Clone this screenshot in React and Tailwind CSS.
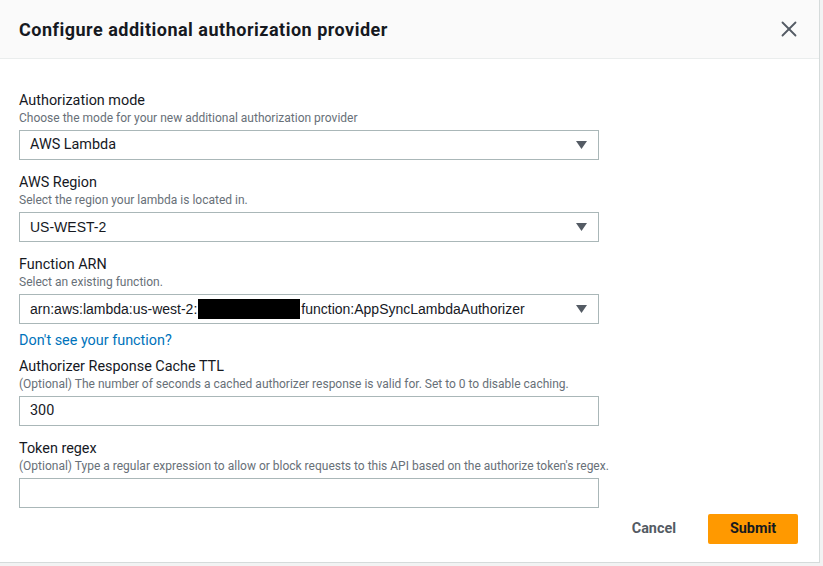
import { X } from "lucide-react";

const Caret = () => (
	<svg width="11" height="8" viewBox="0 0 11 8" className="shrink-0">
		<path d="M0 0h11L5.5 8z" fill="#545b64" />
	</svg>
);

const Field = ({ label, hint, children }) => (
	<div className="mb-3">
		<div className="pt-[1px] text-[14.4px] leading-[19px] text-[#16191f]">{label}</div>
		<div className="text-[12px] leading-[16px] text-[#687078]">{hint}</div>
		<div className="mt-1">{children}</div>
	</div>
);

const SelectBox = ({ children, mono }) => (
	<div className="flex h-[30px] w-[580px] items-center justify-between border border-[#aab7b8] bg-white pl-[10px] pr-[11px]">
		<div
			className={
				mono
					? "flex items-center font-['Liberation_Sans',Arial,sans-serif] text-[14px] text-[#16191f]"
					: "flex items-center text-[14.4px] text-[#16191f]"
			}
		>
			{children}
		</div>
		<Caret />
	</div>
);

const TextBox = ({ value }) => (
	<div className="flex h-[30px] w-[580px] items-center border border-[#aab7b8] bg-white px-[10px] text-[14.4px] text-[#16191f]">
		{value}
	</div>
);

const App = () => {
	return (
		<div className="h-[566px] w-[823px] overflow-hidden bg-[#f2f3f3] font-['Roboto',sans-serif]">
			<div className="flex h-[563px] w-[820px] flex-col border-r border-b border-[#d5dbdb] bg-white">
				<div className="flex h-[59px] shrink-0 items-center justify-between border-b border-[#eaeded] bg-[#fafafa] pl-[19px] pr-[17px]">
					<h2 className="text-[18px] font-bold tracking-[0.5px] text-[#16191f]">
						Configure additional authorization provider
					</h2>
					<X size={26} strokeWidth={1.7} color="#545b64" />
				</div>

				<div className="flex flex-1 flex-col px-[19px] pt-[31px]">
					<Field
						label="Authorization mode"
						hint="Choose the mode for your new additional authorization provider"
					>
						<SelectBox>AWS Lambda</SelectBox>
					</Field>

					<Field
						label="AWS Region"
						hint="Select the region your lambda is located in."
					>
						<SelectBox mono>US-WEST-2</SelectBox>
					</Field>

					<div>
						<div className="pt-[1px] text-[14.4px] leading-[19px] text-[#16191f]">
							Function ARN
						</div>
						<div className="text-[12px] leading-[16px] text-[#687078]">
							Select an existing function.
						</div>
						<div className="mt-1">
							<SelectBox mono>
								arn:aws:lambda:us-west-2:
								<span className="mx-[1px] inline-block h-[20px] w-[102px] bg-black" />
								function:AppSyncLambdaAuthorizer
							</SelectBox>
						</div>
						<div className="mt-[6px] mb-[6px] pt-[1px] text-[14.4px] leading-[19px] text-[#0073bb]">
							Don't see your function?
						</div>
					</div>

					<Field
						label="Authorizer Response Cache TTL"
						hint="(Optional) The number of seconds a cached authorizer response is valid for. Set to 0 to disable caching."
					>
						<TextBox value="300" />
					</Field>

					<Field
						label="Token regex"
						hint="(Optional) Type a regular expression to allow or block requests to this API based on the authorize token's regex."
					>
						<TextBox value="" />
					</Field>

					<div className="-mt-[6px] flex justify-end gap-3 pr-[2px]">
						<button className="h-[30px] px-5 text-[14.4px] font-bold text-[#545b64]">
							Cancel
						</button>
						<button className="h-[30px] w-[90px] rounded-[2px] bg-[#ff9900] text-[14.4px] font-bold text-[#16191f]">
							Submit
						</button>
					</div>
				</div>
			</div>
		</div>
	);
};

export default App;
